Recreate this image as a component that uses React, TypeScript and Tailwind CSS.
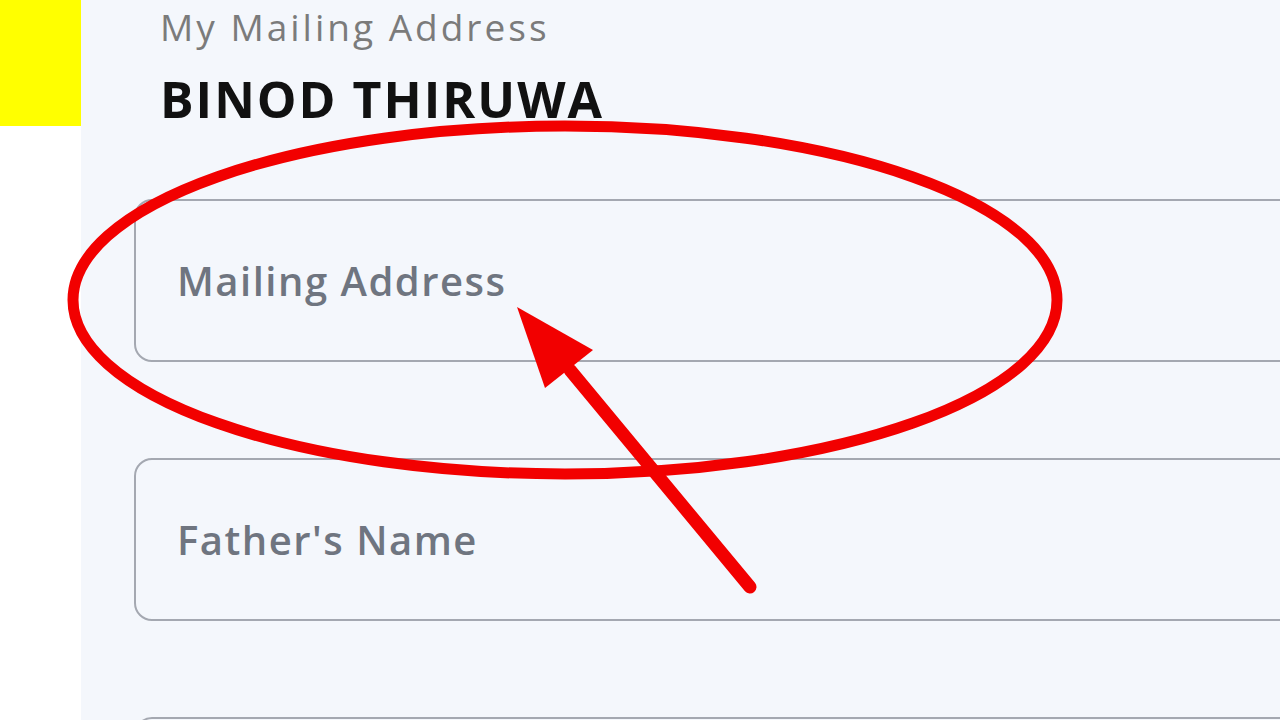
export default function App() {
  const font = { fontFamily: '"Open Sans", "Noto Sans", sans-serif' };
  return (
    <div className="relative flex h-[720px] w-[1280px] overflow-hidden bg-white" style={font}>
      {/* left gutter with the yellow marker */}
      <div className="w-[81px] shrink-0 bg-white">
        <div className="h-[126px] w-full bg-[#ffff00]" />
      </div>

      {/* form panel */}
      <div className="flex flex-1 flex-col bg-[#f4f7fc] pl-[53px]">
        <div className="pl-[26px] pt-[3px]">
          <div className="text-[37px] leading-[48px] tracking-[3px] text-[#7b7b7b]">My Mailing Address</div>
          <div className="mt-[18px] text-[50px] font-bold leading-[60px] tracking-[2px] text-[#111111]">BINOD THIRUWA</div>
        </div>

        <div className="mt-[70px] flex flex-col gap-[96px]">
          {["Mailing Address", "Father's Name", ""].map((label, i) => (
            <div
              key={i}
              className="flex h-[163px] w-[1200px] shrink-0 items-center rounded-[18px] border-2 border-[#a4a8b1] pl-[41px]"
            >
              <span className="text-[40px] font-semibold tracking-[1.5px] text-[#6f7580]">{label}</span>
            </div>
          ))}
        </div>
      </div>

      {/* red annotation drawn over the form */}
      <svg className="pointer-events-none absolute inset-0" width="1280" height="720" viewBox="0 0 1280 720">
        <ellipse cx="565" cy="300" rx="492" ry="174" fill="none" stroke="#f20000" strokeWidth="11" />
        <line x1="750" y1="587" x2="570" y2="370" stroke="#f20000" strokeWidth="13" strokeLinecap="round" />
        <polygon points="517,307 593,350 545,388" fill="#f20000" />
      </svg>
    </div>
  );
}
